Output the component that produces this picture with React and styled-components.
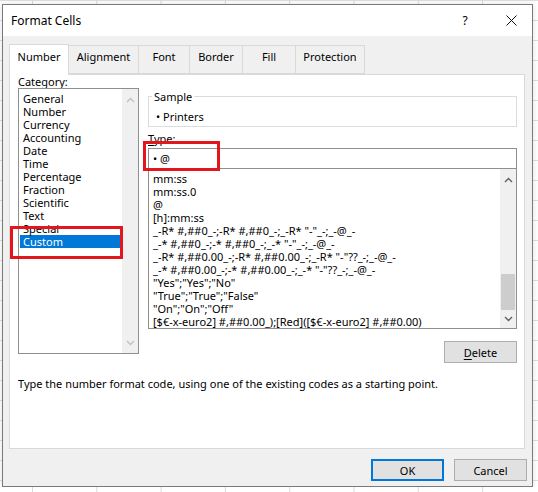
import React from "react";
import styled, { createGlobalStyle } from "styled-components";

const categories = ["General", "Number", "Currency", "Accounting", "Date", "Time", "Percentage", "Fraction", "Scientific", "Text", "Special", "Custom"];

const formats = [
    "mm:ss",
    "mm:ss.0",
    "@",
    "[h]:mm:ss",
    '_-R* #,##0_-;-R* #,##0_-;_-R* "-"_-;_-@_-',
    '_-* #,##0_-;-* #,##0_-;_-* "-"_-;_-@_-',
    '_-R* #,##0.00_-;-R* #,##0.00_-;_-R* "-"??_-;_-@_-',
    '_-* #,##0.00_-;-* #,##0.00_-;_-* "-"??_-;_-@_-',
    '"Yes";"Yes";"No"',
    '"True";"True";"False"',
    '"On";"On";"Off"',
    "[$€-x-euro2] #,##0.00_);[Red]([$€-x-euro2] #,##0.00)",
];

const tabs = [
    {label: "Number", width: 60},
    {label: "Alignment", width: 71},
    {label: "Font", width: 52},
    {label: "Border", width: 54},
    {label: "Fill", width: 54},
    {label: "Protection", width: 70},
];

const Chevron = ({up = false, light = false}) => (
    <svg width="9" height="6" viewBox="0 0 9 6">
        <path
            d={up ? "M1 5 L4.5 1.5 L8 5" : "M1 1 L4.5 4.5 L8 1"}
            fill="none"
            stroke={light ? "#c2c2c2" : "#606060"}
            strokeWidth="1.4"
        />
    </svg>
);

const App = () => {
    return (
        <>
            <GlobalStyle/>
            <Dialog>
                <TitleBar>
                    <Title>Format Cells</Title>
                    <TitleActions>
                        <TitleButton>?</TitleButton>
                        <TitleButton>
                            <svg width="11" height="11" viewBox="0 0 11 11">
                                <path d="M0.5 0.5 L10.5 10.5 M10.5 0.5 L0.5 10.5" stroke="#111" strokeWidth="1"/>
                            </svg>
                        </TitleButton>
                    </TitleActions>
                </TitleBar>

                <Body>
                    <TabRow>
                        {tabs.map((t, i) => (
                            <Tab key={t.label} $active={i === 0} $width={t.width}>{t.label}</Tab>
                        ))}
                    </TabRow>

                    <Panel>
                        <Columns>
                            <Column>
                                <Label><u>C</u>ategory:</Label>
                                <ListBox $height={266}>
                                    <Items $pad="3px 1px 0 1px">
                                        {categories.map(c => (
                                            <Item key={c} $selected={c === "Custom"} $indent={3}>{c}</Item>
                                        ))}
                                    </Items>
                                    <ScrollBar>
                                        <Arrow $height={22}><Chevron up light/></Arrow>
                                        <Track/>
                                        <Arrow $height={20}><Chevron light/></Arrow>
                                    </ScrollBar>
                                </ListBox>
                            </Column>

                            <Column $top={15}>
                                <SampleGroup>
                                    <Legend>Sample</Legend>
                                    <SampleText>• Printers</SampleText>
                                </SampleGroup>
                                <Label $top={5}><u>T</u>ype:</Label>
                                <TypeInput>• @</TypeInput>
                                <ListBox $height={161} $top={-1}>
                                    <Items $pad="3px 0 0 4px">
                                        {formats.map(f => (
                                            <Item key={f} $indent={0}>{f}</Item>
                                        ))}
                                    </Items>
                                    <ScrollBar>
                                        <Arrow $height={22}><Chevron up/></Arrow>
                                        <Track>
                                            <Thumb/>
                                        </Track>
                                        <Arrow $height={18}><Chevron/></Arrow>
                                    </ScrollBar>
                                </ListBox>
                                <ButtonRow>
                                    <Button><u>D</u>elete</Button>
                                </ButtonRow>
                            </Column>
                        </Columns>

                        <Hint>Type the number format code, using one of the existing codes as a starting point.</Hint>

                        <Callout $left={0} $top={151} $w={113} $h={33}/>
                        <Callout $left={133} $top={66} $w={77} $h={30}/>
                    </Panel>

                    <Footer>
                        <Button $primary>OK</Button>
                        <Button>Cancel</Button>
                    </Footer>
                </Body>
            </Dialog>
        </>
    );
};

export default App;

const GlobalStyle = createGlobalStyle`
    body {
        margin: 0;
        background-color: #fff;
        background-image:
            linear-gradient(to right, #d9d9d9 1px, transparent 1px),
            linear-gradient(to bottom, #dedede 1px, transparent 1px);
        background-size: 64.3px 20px;
        background-position: 32px 0, 0 0;
        font-family: "Noto Sans", "Open Sans", sans-serif;
        font-size: 11px;
        color: #000;
    }
    u {
        text-decoration-thickness: 1px;
        text-underline-offset: 2px;
    }
`;

const Dialog = styled.div`
    margin: 4px 0 0 2px;
    width: 531px;
    height: 483px;
    box-sizing: border-box;
    border: 1px solid #7a7a7a;
    background: #f0f0f0;
    display: flex;
    flex-direction: column;
    box-shadow: 0 0 6px rgba(0, 0, 0, 0.12);
`;

const TitleBar = styled.div`
    height: 31px;
    flex: none;
    display: flex;
    align-items: center;
    padding-left: 8px;
    background: #fff;
`;

const Title = styled.div`
    font-size: 12px;
    line-height: 16px;
`;

const TitleActions = styled.div`
    margin-left: auto;
    display: flex;
    gap: 16px;
    padding-right: 6px;
`;

const TitleButton = styled.div`
    width: 30px;
    height: 20px;
    display: flex;
    align-items: center;
    justify-content: center;
    font-size: 12px;
`;

const Body = styled.div`
    flex: 1;
    padding: 9px 7px 0 6px;
    display: flex;
    flex-direction: column;
`;

const TabRow = styled.div`
    display: flex;
    align-items: flex-end;
    height: 29px;
`;

const Tab = styled.div`
    position: relative;
    z-index: ${p => (p.$active ? 1 : 0)};
    box-sizing: border-box;
    width: ${p => p.$width}px;
    height: ${p => (p.$active ? 31 : 29)}px;
    margin-bottom: ${p => (p.$active ? -1 : 0)}px;
    margin-right: -1px;
    padding-top: ${p => (p.$active ? 5 : 4)}px;
    line-height: 13px;
    text-align: center;
    background: ${p => (p.$active ? "#fff" : "#f0f0f0")};
    border: 1px solid #d9d9d9;
    border-bottom: ${p => (p.$active ? "none" : "1px solid #d9d9d9")};
`;

const Panel = styled.div`
    position: relative;
    box-sizing: border-box;
    height: 375px;
    background: #fff;
    border: 1px solid #d9d9d9;
`;

const Columns = styled.div`
    display: grid;
    grid-template-columns: 121px 369px;
    column-gap: 9px;
    padding-left: 8px;
    align-items: start;
`;

const Column = styled.div`
    display: flex;
    flex-direction: column;
    padding-top: ${p => p.$top || 0}px;
`;

const Label = styled.div`
    line-height: 13px;
    margin-top: ${p => p.$top || 0}px;
`;

const ListBox = styled.div`
    box-sizing: border-box;
    height: ${p => p.$height}px;
    margin-top: ${p => p.$top || 0}px;
    border: 1px solid #8f8f8f;
    display: flex;
    background: #fff;
`;

const Items = styled.div`
    flex: 1;
    min-width: 0;
    padding: ${p => p.$pad};
    overflow: hidden;
`;

const Item = styled.div`
    height: 13px;
    line-height: 13px;
    padding-left: ${p => p.$indent}px;
    white-space: nowrap;
    background: ${p => (p.$selected ? "#0078d7" : "transparent")};
    color: ${p => (p.$selected ? "#fff" : "#000")};
`;

const ScrollBar = styled.div`
    width: 16px;
    flex: none;
    display: flex;
    flex-direction: column;
    background: #f0f0f0;
`;

const Arrow = styled.div`
    height: ${p => p.$height}px;
    flex: none;
    display: flex;
    align-items: center;
    justify-content: center;
`;

const Track = styled.div`
    flex: 1;
    display: flex;
    flex-direction: column;
    justify-content: flex-end;
`;

const Thumb = styled.div`
    height: 36px;
    margin: 0 1px;
    background: #cdcdcd;
`;

const SampleGroup = styled.fieldset`
    margin: 0;
    padding: 0 3px 3px;
    border: 1px solid #dcdcdc;
    min-width: 0;
`;

const Legend = styled.legend`
    padding: 0 2px;
    line-height: 13px;
`;

const SampleText = styled.div`
    margin-top: 7px;
    padding-left: 4px;
    line-height: 13px;
`;

const TypeInput = styled.div`
    box-sizing: border-box;
    height: 21px;
    margin-top: 3px;
    border: 1px solid #8f8f8f;
    padding: 3px 0 0 4px;
    line-height: 13px;
    background: #fff;
`;

const ButtonRow = styled.div`
    display: flex;
    justify-content: flex-end;
    margin-top: 12px;
`;

const Button = styled.div`
    box-sizing: border-box;
    width: 73px;
    height: 22px;
    display: flex;
    align-items: center;
    justify-content: center;
    background: #e1e1e1;
    border: ${p => (p.$primary ? "2px solid #0078d7" : "1px solid #adadad")};
    line-height: 13px;
`;

const Hint = styled.div`
    margin-top: 14px;
    padding-left: 8px;
    line-height: 13px;
`;

const Callout = styled.div`
    position: absolute;
    left: ${p => p.$left}px;
    top: ${p => p.$top}px;
    width: ${p => p.$w}px;
    height: ${p => p.$h}px;
    box-sizing: border-box;
    border: 3px solid #e3161d;
    pointer-events: none;
`;

const Footer = styled.div`
    display: flex;
    justify-content: flex-end;
    gap: 10px;
    margin-top: 10px;
    margin-right: -2px;
`;
